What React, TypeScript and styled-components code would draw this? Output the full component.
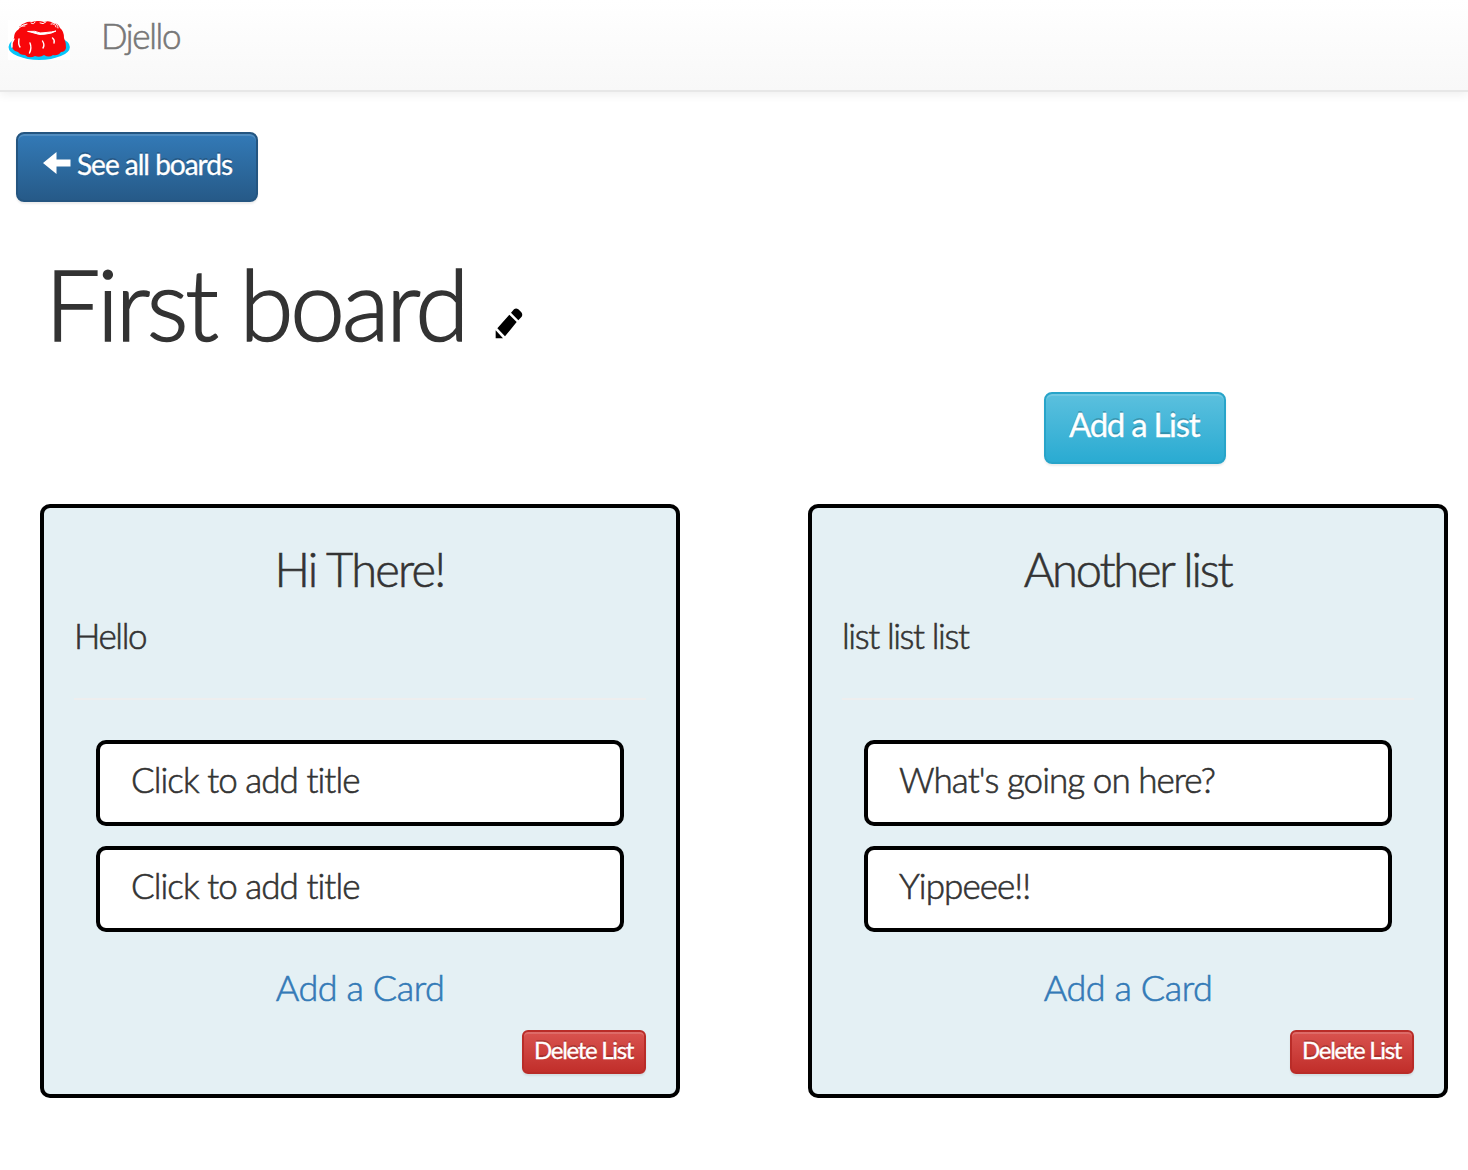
import React from "react";
import styled, { createGlobalStyle, css } from "styled-components";

const GlobalStyle = createGlobalStyle`
  * { box-sizing: border-box; }
  body {
    margin: 0;
    background: #fff;
    color: #333;
    font-family: Lato, "Open Sans", sans-serif;
    font-weight: 300;
    -webkit-text-stroke: 0.6px currentColor;
  }
`;

const Navbar = styled.nav`
  display: flex;
  height: 92px;
  padding: 0 8px;
  border-bottom: 2px solid #e7e7e7;
  background: linear-gradient(#fff, #f8f8f8);
  box-shadow: 0 2px 10px rgba(0, 0, 0, 0.075);
`;

const Logo = styled.svg`
  width: 62px;
  height: 40px;
  margin-top: 20px;
`;

const Brand = styled.span`
  margin: 15px 0 0 31px;
  font-size: 35px;
  line-height: 40px;
  color: #777;
  letter-spacing: -1.35px;
`;

const tones = {
  primary: css`
    border-color: #245580;
    background: linear-gradient(#337ab7, #265a88);
  `,
  info: css`
    border-color: #28a4c9;
    background: linear-gradient(#5bc0de, #2aabd2);
  `,
  danger: css`
    border-color: #b92c28;
    background: linear-gradient(#d9534f, #c12e2a);
  `,
};

const sizes = {
  medium: css`
    width: 242px;
    height: 70px;
    padding: 10px 0 0 23px;
    font-size: 28px;
    line-height: 40px;
    letter-spacing: -1px;
    border-radius: 8px;
  `,
  large: css`
    width: 182px;
    height: 72px;
    padding: 10px 0 0 23px;
    font-size: 33px;
    line-height: 40px;
    letter-spacing: -1.3px;
    border-radius: 8px;
  `,
  small: css`
    width: 124px;
    height: 44px;
    padding: 3px 0 0 10px;
    font-size: 24px;
    line-height: 30px;
    letter-spacing: -1.3px;
    border-radius: 6px;
  `,
};

const Button = styled.button<{ $tone: keyof typeof tones; $size: keyof typeof sizes }>`
  display: flex;
  align-items: flex-start;
  border: 2px solid;
  color: #fff;
  font-family: inherit;
  font-weight: 400;
  white-space: nowrap;
  -webkit-text-stroke: 0.3px currentColor;
  text-shadow: 0 -2px 0 rgba(0, 0, 0, 0.2);
  box-shadow: inset 0 2px 0 rgba(255, 255, 255, 0.15), 0 2px 2px rgba(0, 0, 0, 0.075);
  ${(p) => sizes[p.$size]}
  ${(p) => tones[p.$tone]}
`;

const ArrowIcon = styled.svg`
  width: 28px;
  height: 22px;
  margin: 8px 6px 0 2px;
`;

const Page = styled.main`
  display: flex;
  flex-direction: column;
  padding: 40px 20px 0 16px;
`;

const TitleRow = styled.header`
  display: flex;
  margin: 46px 0 0 29px;
`;

const Title = styled.h1`
  margin: 0;
  font-size: 98px;
  line-height: 110px;
  font-weight: 300;
  letter-spacing: -3.05px;
  -webkit-text-stroke: 1.6px currentColor;
`;

const PencilIcon = styled.svg`
  width: 28px;
  height: 31px;
  margin: 60px 0 0 29px;
`;

const Actions = styled.div`
  display: flex;
  justify-content: flex-end;
  margin: 34px 222px 0 0;
`;

const Lists = styled.div`
  display: flex;
  justify-content: space-between;
  margin: 40px 0 0 24px;
`;

const ListPanel = styled.section`
  display: flex;
  flex-direction: column;
  width: 640px;
  height: 594px;
  padding: 35px 30px 0;
  border: 4px solid #000;
  border-radius: 10px;
  background: #e4f0f4;
`;

const ListTitle = styled.h2<{ $tracking: number }>`
  align-self: center;
  margin: 0 1px 0 0;
  font-size: 47px;
  line-height: 52px;
  font-weight: 300;
  letter-spacing: ${(p) => p.$tracking}px;
`;

const Description = styled.p`
  align-self: flex-start;
  margin: 15px 0 0;
  font-size: 35px;
  line-height: 50px;
  letter-spacing: -1.4px;
`;

const Divider = styled.hr`
  width: 100%;
  height: 2px;
  margin: 38px 0 40px;
  border: 0;
  background: #eee;
`;

const Cards = styled.div`
  display: flex;
  flex-direction: column;
  gap: 20px;
  padding: 0 22px;
`;

const Card = styled.article`
  display: flex;
  height: 86px;
  padding: 10px 0 0 31px;
  border: 4px solid #000;
  border-radius: 10px;
  background: #fff;
`;

const CardTitle = styled.span`
  align-self: flex-start;
  font-size: 35px;
  line-height: 50px;
  white-space: nowrap;
  letter-spacing: -0.95px;
`;

const AddCard = styled.a`
  align-self: center;
  margin-top: 30px;
  font-size: 36px;
  line-height: 50px;
  color: #337ab7;
  letter-spacing: -0.45px;
`;

const Footer = styled.div`
  display: flex;
  justify-content: flex-end;
  margin-top: 18px;
`;

const lists = [
  { title: "Hi There!", tracking: -1.75, text: "Hello", cards: ["Click to add title", "Click to add title"] },
  { title: "Another list", tracking: -2.2, text: "list list list", cards: ["What's going on here?", "Yippeee!!"] },
];

export default function App() {
  return (
    <>
      <GlobalStyle />
      <Navbar>
        <Logo viewBox="0 0 62 40">
          <rect width="62" height="40" fill="#fff" />
          <ellipse cx="31.200" cy="27" rx="30.700" ry="12.900" fill="#08c6fa" />
          <path fill="#f8060a" d="M11 9C11 5 15 4 17 3Q20 1 24 2Q30 0 36 2Q41 0 45 3Q50 3 52 8Q56 11 56 18Q58 22 58 28Q57 32 53 32Q50 36 45 35Q41 38 36 35Q32 38 27 36Q21 39 17 35Q12 35 10 32Q5 31 4 27Q3 22 6 18Q6 12 11 9Z" />
          <g fill="none" stroke="#fff" strokeLinecap="round" strokeLinejoin="round">
            <path d="M20 11.500Q23 12 26 13Q32 15.500 38 14Q44 13.500 48 11Q44 12 38 12.500Q32 14 27 11.500Z" strokeWidth="1" fill="#fff" />
            <path d="M11 8Q15 4 19 4M11 5Q13 7 17 6M23 3Q26 5 27 2M32 3Q35 5 38 2M43 4Q47 3 48 7M46 3Q50 4 50 8" strokeWidth="1" />
            <path d="M11 19Q10 24 12 27M22 23Q24 28 21.500 33M34.500 21Q37 25 35 28M44.500 18Q47 20 46 23M6 19Q3 23 4 27" strokeWidth="1.400" />
          </g>
        </Logo>
        <Brand>Djello</Brand>
      </Navbar>
      <Page>
        <Button $tone="primary" $size="medium">
          <ArrowIcon viewBox="0 0 28 22" fill="#fff">
            <path d="M0 11 13.500 0V7.500H27.500V14.500H13.500V22Z" />
          </ArrowIcon>
          <span>See all boards</span>
        </Button>
        <TitleRow>
          <Title>First board</Title>
          <PencilIcon viewBox="48 37 84 93">
            <path d="M50 104 72 128H50ZM55 98 91 57 113 79 78 122ZM96 51 105 41Q111 36 118 41L127 50Q132 57 128 63L118 74Z" />
          </PencilIcon>
        </TitleRow>
        <Actions>
          <Button $tone="info" $size="large"><span>Add a List</span></Button>
        </Actions>
        <Lists>
          {lists.map((list) => (
            <ListPanel key={list.title}>
              <ListTitle $tracking={list.tracking}>{list.title}</ListTitle>
              <Description>{list.text}</Description>
              <Divider />
              <Cards>
                {list.cards.map((title, i) => (
                  <Card key={i}><CardTitle>{title}</CardTitle></Card>
                ))}
              </Cards>
              <AddCard>Add a Card</AddCard>
              <Footer>
                <Button $tone="danger" $size="small"><span>Delete List</span></Button>
              </Footer>
            </ListPanel>
          ))}
        </Lists>
      </Page>
    </>
  );
}
